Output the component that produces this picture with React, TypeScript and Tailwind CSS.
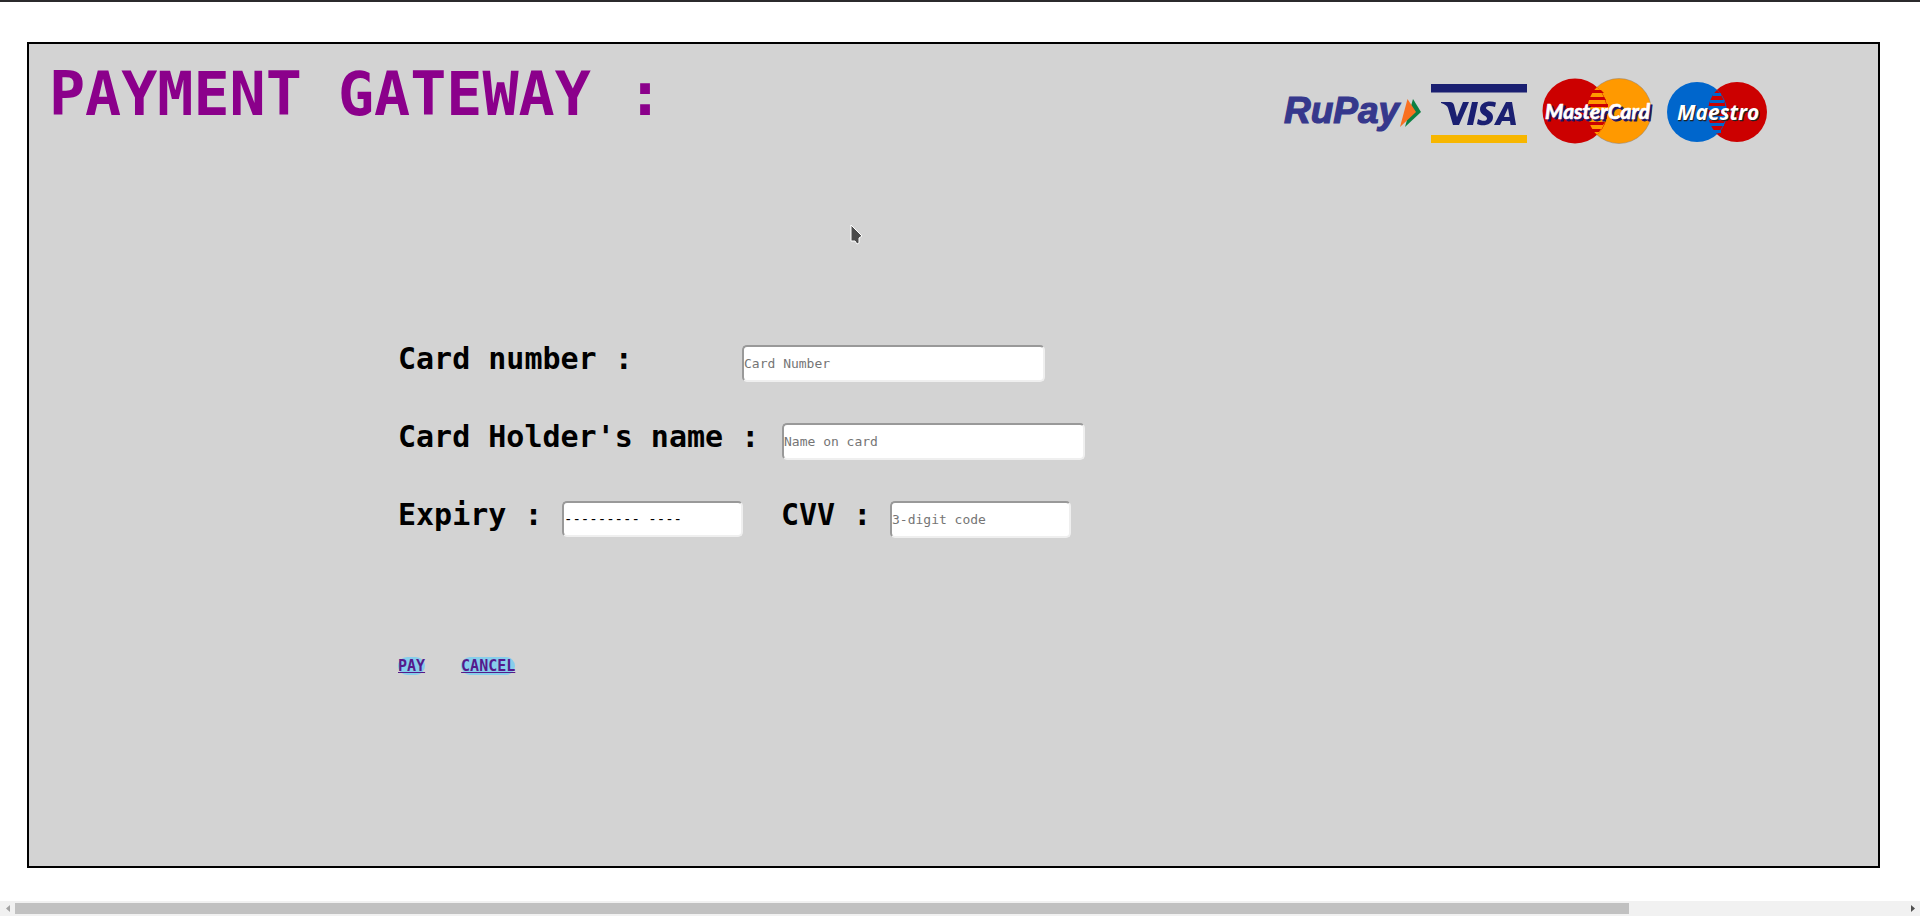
import type { InputHTMLAttributes, ReactNode } from "react";

const fieldBase =
  "rounded-[5px] border-2 border-t-[#999999] border-l-[#999999] border-r-[#efefef] border-b-[#efefef] bg-white leading-4 text-black placeholder:text-[#757575]";

function Field({
  id,
  label,
  labelClass = "",
  inputClass,
  ...rest
}: { id: string; label: ReactNode; labelClass?: string; inputClass: string } & InputHTMLAttributes<HTMLInputElement>) {
  return (
    <div className="flex items-start">
      <label htmlFor={id} className={`text-[30px] leading-9 font-bold ${labelClass}`}>
        {label}
      </label>
      <input id={id} className={`mt-1 ${fieldBase} ${inputClass}`} {...rest} />
    </div>
  );
}

function RuPay() {
  return (
    <svg viewBox="0 0 148 66" className="h-[66px] w-[148px] overflow-visible" role="img" aria-label="RuPay">
      <text x="1" y="45" fontFamily="Liberation Sans" fontWeight="bold" fontStyle="italic" fontSize="37" fill="#36388c" stroke="#36388c" strokeWidth="1.2">
        RuPay
      </text>
      <path d="M130 21L138 34L122 49Z" fill="#0b8043" />
      <path d="M124.500 21L133 34L117 49Z" fill="#f97020" />
    </svg>
  );
}

function Visa() {
  return (
    <svg viewBox="0 0 96 66" className="h-[66px] w-24" role="img" aria-label="VISA">
      <path d="M0 6H96V14.500H0Z" fill="#1a1f71" />
      <path d="M0 57H96V65H0Z" fill="#f7b600" />
      <g transform="translate(0 6)" fill="#1a1f71">
        <path d="M10 18H19Q22 18 23 21L26 33L32 18H38L28 41H22L17 24Q16 21 10 19Z" />
        <path d="M41 18H47L42 41H36Z" />
        <path d="M65 18.500L64 23C60 21.500 55 21.500 55 24C55 26.500 62 27 62 33C62 41 52 43 46 40L47 35C51 37.500 56 37.500 56 34.500C56 31.500 49 31 49 25.500C49 18 58 16 65 18.500Z" />
        <path fillRule="evenodd" d="M75 18H81L85 41H79.500L79 37H71L69 41H63ZM77 24L73 33H78.500Z" />
      </g>
    </svg>
  );
}

function MasterCard() {
  return (
    <svg viewBox="0 0 110 66" className="h-[66px] w-[110px] overflow-visible" role="img" aria-label="MasterCard">
      <circle cx="77" cy="33" r="32.500" fill="#ff9900" stroke="#8f7f70" strokeWidth="0.5" />
      <circle cx="33" cy="33" r="32.500" fill="#cc0000" />
      <path d="M55 9C42 22 42 44 55 57C68 44 68 22 55 9Z" fill="#ff9900" />
      <path d="M46 12H59L62 15H46ZM46 19H62L64 22H46ZM46 26H66V29H46ZM46 37H65V41H46ZM46 44H63L61 47H46ZM46 51H59L57 54H46Z" fill="#cc0000" />
      <g fontFamily="Lato" fontWeight="bold" fontStyle="italic" fontSize="21">
        <text x="5" y="43" fill="#1b1464" stroke="#1b1464" strokeWidth="0.8">MasterCard</text>
        <text x="3" y="41" fill="#fff" stroke="#fff" strokeWidth="0.6">MasterCard</text>
      </g>
    </svg>
  );
}

function Maestro() {
  return (
    <svg viewBox="0 0 100 66" className="h-[66px] w-[100px] overflow-visible" role="img" aria-label="Maestro">
      <circle cx="70" cy="34" r="30" fill="#cc0000" />
      <circle cx="30" cy="34" r="30" fill="#0066cc" />
      <path d="M50 12C38 24 38 44 50 56C62 44 62 24 50 12Z" fill="#cc0000" />
      <path d="M46 15H54V18H46ZM43 22H57V25H43ZM41 28H59V32H41ZM41 38H59V42H41ZM43 45H57V48H43ZM46 52H54V55H46Z" fill="#0066cc" />
      <g fontFamily="Open Sans" fontWeight="bold" fontStyle="italic" fontSize="21">
        <text x="11" y="43" fill="#222" stroke="#222" strokeWidth="0.4">Maestro</text>
        <text x="10" y="42" fill="#fff">Maestro</text>
      </g>
    </svg>
  );
}

const linkClass = "rounded-[10px] bg-[#87ceeb] text-[15px] leading-[18px] font-bold text-[#551a8b] underline";

export default function App() {
  return (
    <div className="flex min-h-screen flex-col border-t-2 border-[#2b2a2c] bg-white font-['DejaVu_Sans_Mono',monospace]">
      <main className="relative mt-10 mr-10 mb-[33px] ml-[27px] flex-1 border-2 border-black bg-[#d3d3d3]">
        <header className="flex items-start justify-between pt-3.5 pr-[111px] pl-5">
          <h1 className="text-[60px] leading-[72px] font-bold text-[#8b008b]">PAYMENT GATEWAY :</h1>
          <div className="mt-5 flex items-center">
            <RuPay />
            <Visa />
            <div className="ml-[15px]"><MasterCard /></div>
            <div className="ml-[15px]"><Maestro /></div>
          </div>
        </header>
        <form className="mt-[197px] ml-[369px] flex flex-col gap-[37px]">
          <Field id="number" label="Card number :" labelClass="w-[344px]" inputClass="h-[37px] w-[303px] text-[13px]" type="text" placeholder="Card Number" />
          <Field id="holder" label="Card Holder's name :" labelClass="w-96" inputClass="h-[37px] w-[303px] text-[13px]" type="text" placeholder="Name on card" />
          <div className="flex items-start">
            <Field
              id="expiry"
              label="Expiry :"
              labelClass="w-[164px]"
              inputClass="h-9 w-[181px] text-sm"
              type="text"
              defaultValue="--------- ----"
            />
            <div className="ml-[38px]">
              <Field id="cvv" label="CVV :" labelClass="w-[109px]" inputClass="h-[37px] w-[181px] text-[13px]" type="text" placeholder="3-digit code" />
            </div>
          </div>
          <nav className="mt-[82px] flex gap-9">
            <a href="#pay" className={linkClass}>PAY</a>
            <a href="#cancel" className={linkClass}>CANCEL</a>
          </nav>
        </form>
        <svg viewBox="0 0 13 21" className="absolute top-[180px] left-[821px] h-[21px] w-[13px]" aria-hidden="true">
          <path d="M1 1L12 12L9 14V19L7 20L5 17H1Z" fill="#4a4a4a" stroke="#fff" />
        </svg>
      </main>
      <div className="flex h-[15px] items-center bg-[#f1f1f1]">
        <button type="button" aria-label="Scroll left" className="flex h-full w-[15px] items-center justify-center">
          <svg viewBox="0 0 4 7" className="h-[7px] w-1"><path d="M4 0V7L0 3.500Z" fill="#a3a3a3" /></svg>
        </button>
        <div className="h-[11px] flex-1">
          <div className="h-full w-[85.4%] bg-[#c1c1c1]" />
        </div>
        <button type="button" aria-label="Scroll right" className="flex h-full w-[15px] items-center justify-center">
          <svg viewBox="0 0 4 7" className="h-[7px] w-1"><path d="M0 0V7L4 3.500Z" fill="#505050" /></svg>
        </button>
      </div>
    </div>
  );
}
